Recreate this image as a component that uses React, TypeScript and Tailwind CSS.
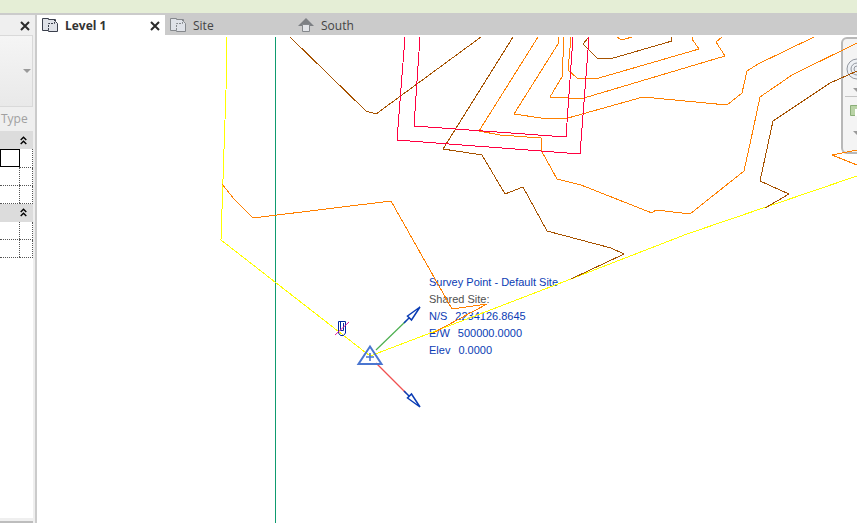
import { useState } from "react";

const ORANGE = "#ff8000";
const BROWN = "#a65200";
const CRIMSON = "#ff0040";
const YELLOW = "#ffff00";

type Line = { color: string; points: string };

const SITE_LINES: Line[] = [
    { color: YELLOW, points: "227,37 226,90 221,240 370,356 433,332 571,279 687,234 857,176" },
    { color: BROWN, points: "290,37 366,111 376,114 481,37" },
    { color: BROWN, points: "513,37 443,149 482,155 505,194 523,187 547,231 611,248 624,254 571,279" },
    { color: BROWN, points: "589,37 583,44 597,58 610,59 672,41 671,37" },
    { color: BROWN, points: "857,71 830,83 773,121 760,181 789,194 765,208" },
    { color: ORANGE, points: "617,37 620,39 625,39 632,37" },
    { color: ORANGE, points: "692,37 692,39 699,49 599,78 577,78 568,70 571,37" },
    { color: ORANGE, points: "722,37 716,42 725,56 584,98 568,98 550,97 562,77 564,37" },
    { color: ORANGE, points: "559,37 558,44 514,114 541,118 568,118 643,97 727,105 742,93 747,71 758,64 814,37" },
    { color: ORANGE, points: "538,37 479,131 500,135 541,138 541,150 557,179 581,185 652,213 656,210 690,214 744,171 753,130 760,97 792,75 857,43" },
    { color: ORANGE, points: "857,150 832,155 857,165" },
    { color: ORANGE, points: "222,184 234,199 253,218 391,201 452,309 487,304 433,333" },
    { color: CRIMSON, points: "405,37 397,140 580,154 589,37" },
    { color: CRIMSON, points: "420,37 414,126 566,137 573,37" },
];

const COORDINATES = [
    { label: "N/S", value: "2234126.8645" },
    { label: "E/W", value: "500000.0000" },
    { label: "Elev", value: "0.0000" },
];

const CloseIcon = () => (
    <svg width="10" height="10" viewBox="0 0 10 10" className="shrink-0">
        <path d="M1 1 9 9M9 1 1 9" stroke="#2b2b2b" strokeWidth="2" />
    </svg>
);

const PlanIcon = ({ color }: { color: string }) => (
    <svg
        width="16"
        height="16"
        viewBox="0 0 16 16"
        fill="none"
        stroke={color}
        className="shrink-0"
    >
        <path d="M.5 .5H6.5V1.500H13.500V3.500L15.500 5.500V13.500H6.500V12.500H.5Z" fill="#dfe2e8" />
        <path d="M6.500 12V5.500H12.500V2" strokeDasharray="2 1" />
    </svg>
);

const ElevationIcon = () => (
    <svg width="16" height="16" viewBox="0 0 16 16" className="shrink-0">
        <path d="M8 0 16 8H0Z" fill="#7d8084" />
        <path d="M4.5 6.5H11.5V13.5H4.5Z" fill="#e2e4e8" stroke="#85888c" />
    </svg>
);

const Caret = () => (
    <svg width="8" height="4" viewBox="0 0 8 4">
        <path d="M0 0H8L4 4Z" fill="#9a9a9a" />
    </svg>
);

const GroupHeader = ({ name }: { name: string }) => (
    <button
        aria-label={name}
        className="flex h-[18px] w-full items-center justify-end bg-[#dcdcdc] pr-[6px]"
    >
        <svg width="7" height="9" viewBox="0 0 7 9" fill="none" stroke="#000" strokeWidth="1.4">
            <path d="M.7 4 3.5 1.2 6.3 4M.7 8 3.5 5.2 6.3 8" />
        </svg>
    </button>
);

const PropertyRows = ({ rows, selected }: { rows: number; selected?: boolean }) => (
    <table className="w-full table-fixed border-collapse bg-white">
        <tbody>
            {Array.from({ length: rows }, (_, i) => (
                <tr key={i} className="h-[18px]">
                    <td
                        className={
                            selected && i === 0
                                ? "p-0 outline outline-1 -outline-offset-1 outline-black"
                                : "border-b border-dotted border-[#555] p-0"
                        }
                    />
                    <td className="w-[13px] border border-t-0 border-dotted border-[#555] p-0" />
                </tr>
            ))}
        </tbody>
    </table>
);

const PropertiesPanel = () => (
    <aside className="flex w-[37px] shrink-0 flex-col border-r-2 border-[#cbcbcb] bg-[#efefef] pr-[2px]">
        <div className="flex h-5 items-center justify-end pt-[2px] pr-[3px]">
            <button aria-label="Close properties">
                <CloseIcon />
            </button>
        </div>
        <button
            aria-label="Type selector"
            className="flex h-[72px] items-center justify-end border border-l-0 border-[#d9d9d9] bg-linear-to-b from-[#f5f5f5] to-[#e9e9e9] pr-[1px]"
        >
            <Caret />
        </button>
        <div className="flex h-6 items-center pl-[1px] font-['Open_Sans',sans-serif] text-[12px] leading-4 text-[#a0a0a0]">
            Type
        </div>
        <GroupHeader name="Graphics" />
        <PropertyRows rows={3} selected />
        <GroupHeader name="Extents" />
        <PropertyRows rows={2} />
        <div className="flex-1 bg-white" />
        <div className="h-[5px] border-b-2 border-[#bdbdbd]" />
    </aside>
);

const SurveyLabel = () => (
    <div className="absolute top-[239px] left-[392px] font-['Liberation_Sans',Arial,sans-serif] text-[11px] leading-[17px] whitespace-nowrap text-[#0a3cb4]">
        <p>Survey Point - Default Site</p>
        <p className="text-[#505050]">Shared Site:</p>
        {COORDINATES.map((item) => (
            <p key={item.label} className="flex gap-2">
                <span>{item.label}</span>
                <span>{item.value}</span>
            </p>
        ))}
    </div>
);

const SiteDrawing = () => (
    <svg className="pointer-events-none absolute inset-0 h-full w-full" fill="none">
        <g transform="translate(-37 -35)">
            <g shapeRendering="crispEdges">
                <path d="M275.5 37V2000" stroke="#0f9b6f" />
                {SITE_LINES.map((line) => (
                    <polyline key={line.points} points={line.points} stroke={line.color} />
                ))}
            </g>
            <path d="M376 350 406 321" stroke="#4caf50" strokeWidth="1.2" />
            <path d="M376 363 406 393" stroke="#f05050" strokeWidth="1.2" />
            <g stroke="#0a3cb4" strokeWidth="1.5">
                <path d="M404 323 409 318M407.500 316 420 307 411.500 320Z" />
                <path d="M404 391 409 396M407.500 398 420 407 411.500 394Z" />
            </g>
            <path d="M370 346.500 381.500 364H358.500Z" stroke="#4a76d0" strokeWidth="2" />
            <path d="M370 353V361M366 357H374" stroke="#4a76d0" strokeWidth="1.600" />
            <path
                d="M338.500 321.500H345.500V333L343.500 335.500H340.500L338.500 333ZM340.500 322V330.500H343.500V323"
                stroke="#0028a0"
            />
            <path d="M335 335 349 322" stroke="#e020a0" />
        </g>
    </svg>
);

const NavigationBar = () => (
    <nav className="absolute top-[2px] -right-4 flex h-[117px] w-8 flex-col items-center rounded-md border-2 border-[#b8b8b8] bg-[#f4f4f4]">
        <button aria-label="Steering wheel" className="mt-[19px]">
            <svg width="22" height="22" viewBox="0 0 22 22" fill="#edf0f4" stroke="#92979f">
                <circle cx="11" cy="11" r="10" />
                <circle cx="11" cy="11" r="6" />
                <circle cx="11" cy="11" r="3" />
            </svg>
        </button>
        <div className="mt-2 flex">
            <Caret />
        </div>
        <div className="mt-1 h-px w-6 bg-[#c4c4c4]" />
        <button aria-label="Zoom" className="mt-2">
            <svg width="14" height="11" viewBox="0 0 14 11">
                <path d="M.5 .5H13.500V10.500H.5Z" fill="#b9d3a6" stroke="#8aae78" />
                <path d="M5 4H11V11H5Z" fill="#fff" />
            </svg>
        </button>
        <div className="mt-[15px] flex">
            <Caret />
        </div>
    </nav>
);

const TABS = ["Level 1", "Site", "South"];

export default function App() {
    const [activeTab, setActiveTab] = useState("Level 1");

    return (
        <div className="flex h-screen flex-col overflow-hidden bg-white">
            <div className="h-[15px] shrink-0 border-b-2 border-[#cbcbcb] bg-[#e5eed6]" />
            <div className="flex min-h-0 flex-1">
                <PropertiesPanel />
                <main className="flex min-w-0 flex-1 flex-col">
                    <div className="flex h-5 shrink-0 bg-[#cbcbcb] font-['Open_Sans',sans-serif] text-[12px] leading-4 text-[#444]">
                        {TABS.map((tab) => (
                            <div
                                key={tab}
                                className={
                                    tab === activeTab
                                        ? "flex w-32 items-center bg-white px-[5px] pt-[2px] font-bold text-[#333]"
                                        : "flex w-32 items-center px-[5px] pt-[2px]"
                                }
                            >
                                <button
                                    className="flex flex-1 items-center gap-[7px]"
                                    onClick={() => setActiveTab(tab)}
                                >
                                    {tab === "South" ? (
                                        <ElevationIcon />
                                    ) : (
                                        <PlanIcon color={tab === activeTab ? "#3a3f4c" : "#85888c"} />
                                    )}
                                    {tab}
                                </button>
                                {tab === activeTab && (
                                    <button aria-label={`Close ${tab}`}>
                                        <CloseIcon />
                                    </button>
                                )}
                            </div>
                        ))}
                    </div>
                    <div className="relative flex-1 overflow-hidden">
                        <SurveyLabel />
                        <NavigationBar />
                        <SiteDrawing />
                    </div>
                </main>
            </div>
        </div>
    );
}
